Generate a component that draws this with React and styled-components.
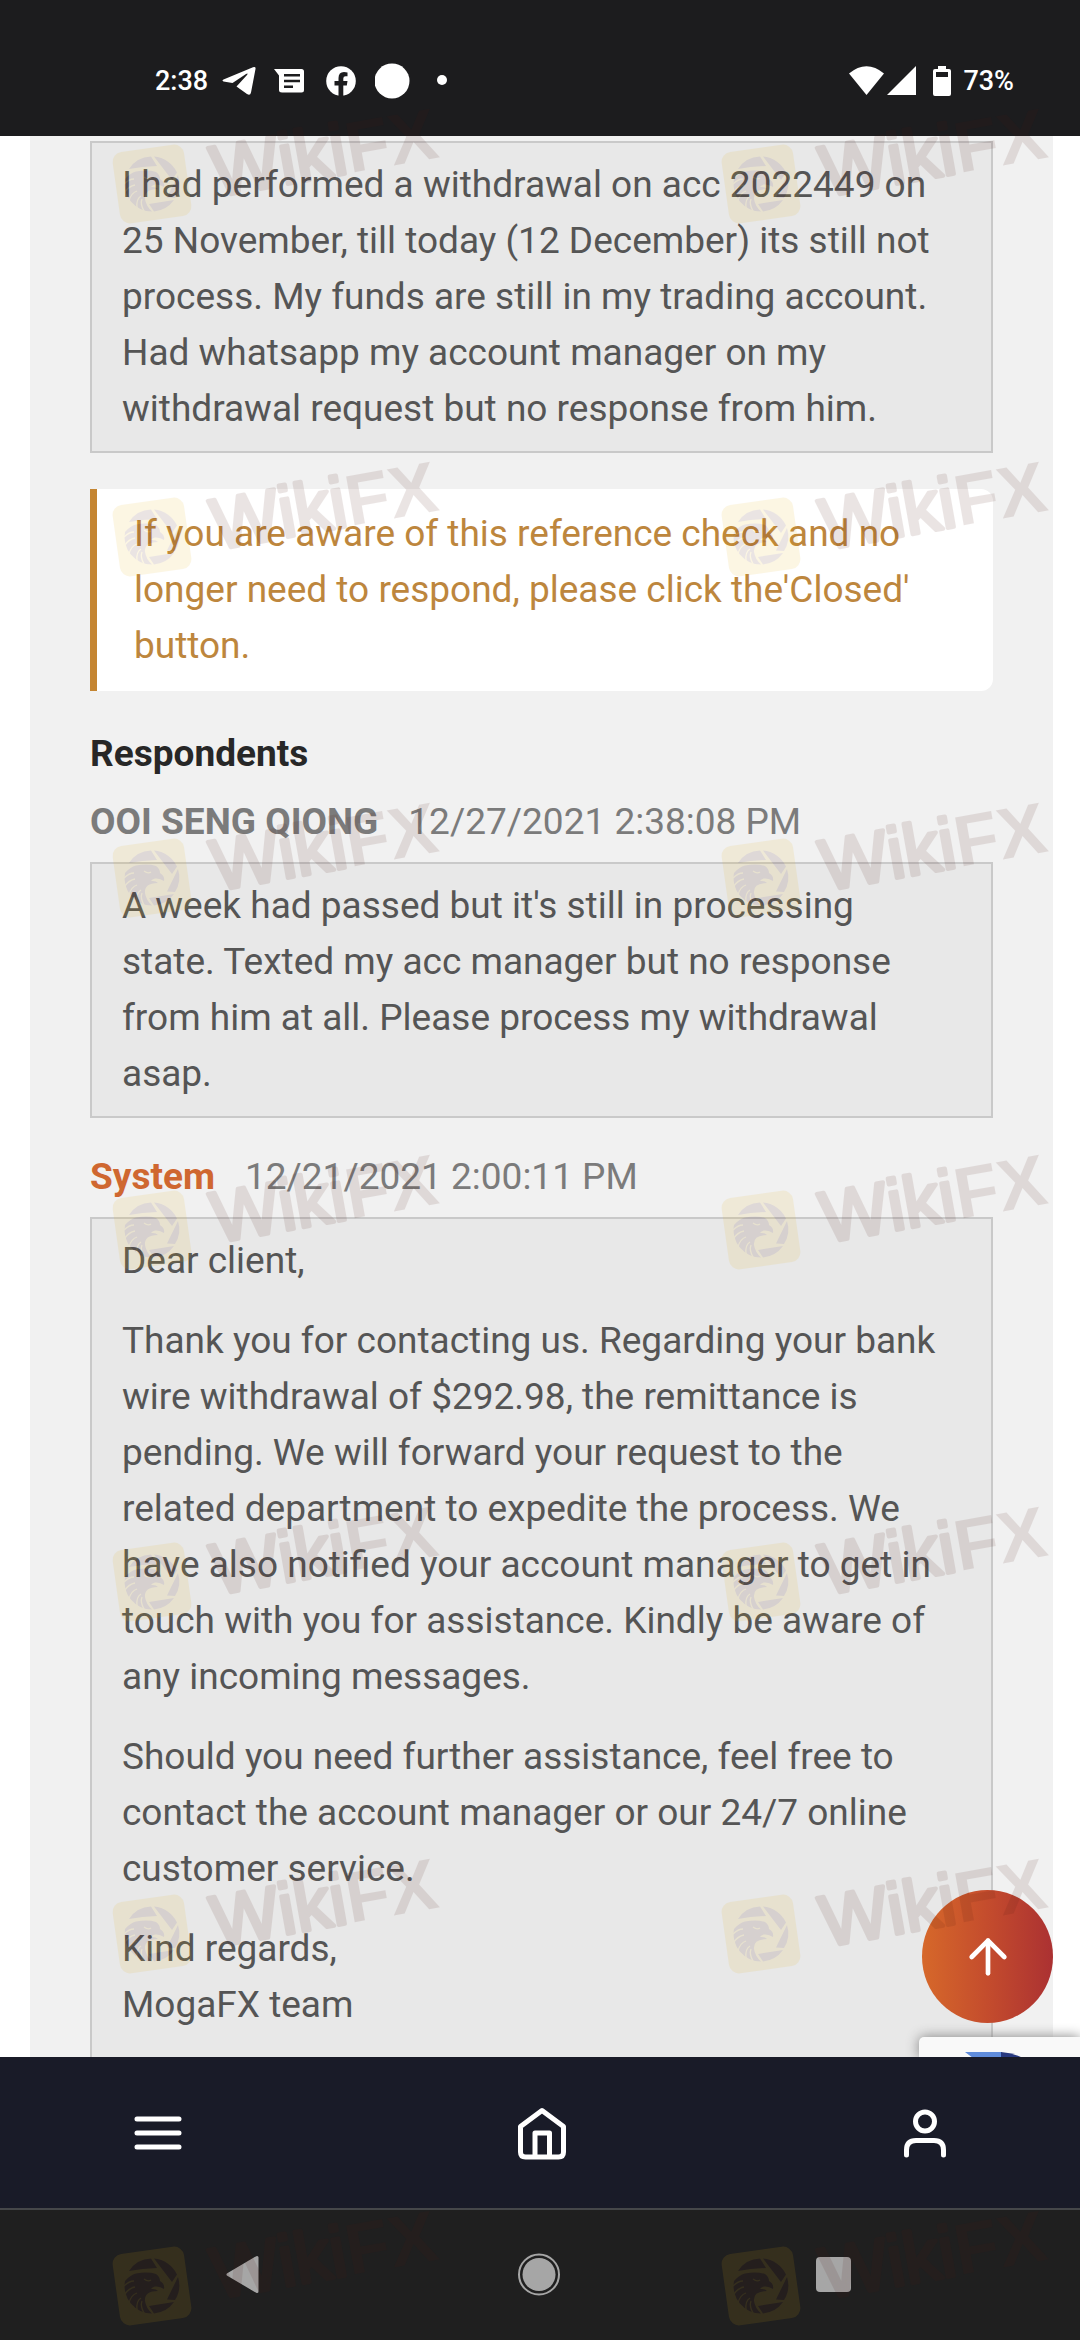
import React from 'react'
import styled, { createGlobalStyle } from 'styled-components'
import { ArrowUp } from 'lucide-react'

const GlobalStyle = createGlobalStyle`
  * {
    box-sizing: border-box;
  }
  body {
    margin: 0;
    background: #ffffff;
    font-family: Roboto, 'Liberation Sans', sans-serif;
  }
`

const Screen = styled.div`
  position: relative;
  display: flex;
  flex-direction: column;
  height: 100vh;
  overflow: hidden;
`

/* status bar */
const StatusBar = styled.header`
  display: flex;
  flex: none;
  align-items: center;
  justify-content: space-between;
  height: 136px;
  padding: 26px 66px 0 155px;
  background: #1c1c1e;
  color: #ffffff;
  font-size: 27px;
  font-weight: 500;
  line-height: 32px;
`

const StatusGroup = styled.div`
  display: flex;
  align-items: center;
  gap: ${props => props.$gap}px;

  svg {
    display: block;
  }
`

/* scrolled page */
const Page = styled.main`
  position: relative;
  flex: 1;
  min-height: 0;
  overflow: hidden;
  padding: 0 27px 0 30px;
`

const Panel = styled.section`
  min-height: 100%;
  padding: 5px 60px 60px;
  background: #f1f1f1;
  font-size: 37px;
  line-height: 56px;
`

const Message = styled.div`
  padding: 14px 42px 14px 30px;
  border: 2px solid #c9c9c9;
  background: #e8e8e8;
  color: #555555;

  p {
    margin: 0;
  }
  p + p {
    margin-top: 24px;
  }
`

const Letter = styled(Message)`
  padding-bottom: 38px;
`

const Notice = styled.p`
  margin: 36px 0 35px;
  padding: 17px 30px 17px 37px;
  border-left: 7px solid #c48532;
  border-radius: 0 12px 12px 0;
  background: #ffffff;
  color: #bd863d;
`

const Heading = styled.h2`
  margin: 0 0 12px;
  color: #272727;
  font-size: 37px;
  font-weight: 700;
`

const Meta = styled.div`
  display: flex;
  gap: 30px;
  margin: ${props => props.$top || 0}px 0 12px;
  color: #7b7b7b;
`

const Author = styled.strong`
  color: ${props => (props.$system ? '#cf6730' : '#7b7b7b')};
  font-weight: 700;
`

const TopButton = styled.button`
  position: absolute;
  right: 27px;
  bottom: 34px;
  display: flex;
  align-items: center;
  justify-content: center;
  width: 131px;
  height: 133px;
  padding: 0;
  border: 0;
  border-radius: 50%;
  background: linear-gradient(90deg, #d6682a, #c44c2d 50%, #ab3132);
  color: #ffffff;
`

const Captcha = styled.div`
  position: absolute;
  right: 0;
  bottom: 0;
  width: 161px;
  height: 20px;
  padding: 15px 0 0 46px;
  border-radius: 5px 0 0 0;
  background: #f9f9f9;
  box-shadow: 0 0 13px #808080;
  overflow: hidden;

  svg {
    display: block;
  }
`

/* bottom bars */
const BottomNav = styled.nav`
  display: flex;
  flex: none;
  align-items: center;
  justify-content: space-between;
  height: 153px;
  padding: 0 127px 0 130px;
  border-bottom: 2px solid #454749;
  background: #191b28;
`

const SystemNav = styled.nav`
  display: flex;
  flex: none;
  align-items: center;
  justify-content: space-between;
  height: 130px;
  padding: 0 224px 0 220px;
  background: #1f1f1f;
`

const IconButton = styled.button`
  padding: 0;
  border: 0;
  background: none;
  color: ${props => props.$color};

  svg {
    display: block;
  }
`

/* watermark laid over the whole screen */
const WatermarkLayer = styled.div`
  position: absolute;
  inset: 0;
  display: grid;
  grid-template-columns: auto auto;
  grid-template-rows: 353px 341px repeat(5, 352px);
  justify-content: space-between;
  padding: 105px 26px 0 100px;
  pointer-events: none;
`

const Mark = styled.svg`
  display: block;
  width: 345px;
  height: 132px;
  overflow: visible;
  opacity: 0.11;
`

const MarkText = styled.text`
  fill: #4d1810;
  font-family: 'Liberation Sans', Arial, sans-serif;
  font-size: 72px;
  font-weight: ${props => (props.$round ? 400 : 700)};
  stroke: #4d1810;
  stroke-width: ${props => (props.$round ? 4 : 0)};
  stroke-linejoin: round;
`

function Watermark() {
  return (
    <Mark viewBox="0 0 345 132" aria-hidden="true">
      <rect x="16" y="43" width="72" height="72" rx="10" fill="#e5b010" transform="rotate(-8 52 79)" />
      <g transform="translate(52 79)" fill="#4d1810">
        <path d="M-23-15A27.5 27.5 0 0 1-1-27.4L5-18Q-10-17.5-23-15Z" />
        <path d="M2-27.4A27.5 27.5 0 0 1 25-11.5L20-4Z" />
        <path d="M26-9A27.5 27.5 0 0 1 23 14L15 13.5Z" />
        <path d="M22 16A27.5 27.5 0 0 1 2 27.4L-3 20Z" />
        <path d="M0 27.5A27.5 27.5 0 0 1-27-5Q-22-11-16-12.5Q-4-14.5 4-12Q8-9 8-5Q13-2 12 3Q8 0 3 .5Q0 1 -1 3Q4 2.500 6 5Q-8 5-7 15Q-6 22 0 27.5Z" />
        <g fill="none" stroke="#e5b010" strokeWidth="1.3">
          <path d="M-28 0Q-23-5-18-5" />
          <path d="M-28 9Q-23 2-17 1" />
          <path d="M-23 17Q-21 9-15 7" />
          <path d="M-15 24Q-16 15-11 12" />
          <path d="M-8 27Q-12 20-10 15" />
          <path d="M-8-7Q-4-4-1-6" />
        </g>
      </g>
      <g transform="translate(114 92) rotate(-10)">
        <MarkText x="2" $round>Wiki</MarkText>
        <MarkText x="138">FX</MarkText>
      </g>
    </Mark>
  )
}

function StatusIcons() {
  return (
    <StatusGroup $gap={18}>
      <svg width="34" height="30" viewBox="0 0 34 30" fill="#ffffff">
        <path d="M1.500 13.500L31 1.200Q34 .4 33.500 3L29 26.500Q28.200 30 25 28L14.500 20.500L25 9Q26.500 6.800 24 8L10.500 17L1.500 15.500Q-.5 14.500 1.500 13.500Z" />
      </svg>
      <svg width="32" height="26" viewBox="0 0 32 26">
        <path fill="#ffffff" d="M0 1H27.500Q30 1 30 3.500V22Q30 24.500 27.500 24.500H8Q5 24.500 5 22V7.500Z" />
        <path stroke="#1c1c1e" strokeWidth="2.500" d="M10 7.200H26M10 13H26M10 18.700H19" />
      </svg>
      <svg width="33" height="30" viewBox="0 0 33 30">
        <circle cx="17" cy="15" r="14.800" fill="#ffffff" />
        <path fill="#1c1c1e" d="M14.500 30V19.500H10.500V15H14.500V12Q14.500 6 20 6Q22 6 23.500 6.400V10.200H21.500Q19.300 10.200 19.300 12.500V15H23.500L22.800 19.500H19.300V30Z" />
      </svg>
      <svg width="35" height="36" viewBox="0 0 35 36">
        <circle cx="17" cy="18" r="17.500" fill="#ffffff" />
      </svg>
      <svg width="28" height="12" viewBox="0 0 28 12">
        <circle cx="14" cy="5" r="5" fill="#ffffff" />
      </svg>
    </StatusGroup>
  )
}

function Home() {
  return (
    <svg width="56" height="56" viewBox="0 0 56 56" fill="none" stroke="currentColor" strokeWidth="5" strokeLinejoin="round">
      <path d="M28 5.500L49.500 21.500V47Q49.500 52 44.500 52H11.500Q6.500 52 6.500 47V21.500Z" />
      <path d="M21 52V28H35.500V52" />
    </svg>
  )
}

function User() {
  return (
    <svg width="56" height="56" viewBox="0 0 56 56" fill="none" stroke="currentColor" strokeWidth="5" strokeLinecap="round">
      <circle cx="28" cy="16.500" r="9.500" />
      <path d="M9.500 50V45Q9.500 35.500 19 35.500H37Q46.500 35.500 46.500 45V50" />
    </svg>
  )
}

export default function App() {
  return (
    <Screen>
      <GlobalStyle />
      <StatusBar>
        <StatusGroup $gap={14}>
          <span>2:38</span>
          <StatusIcons />
        </StatusGroup>
        <StatusGroup $gap={12}>
          <svg width="102" height="30" viewBox="0 0 102 30" fill="#ffffff">
            <path d="M0 7.500Q17.500-7 35 7.500L17.500 29Z" />
            <path d="M67 0V29H38Z" />
            <path fillRule="evenodd" d="M89 0H97V3H100Q102 3 102 5V28Q102 30 100 30H86Q84 30 84 28V5Q84 3 86 3H89ZM87 6V11H99V6Z" />
          </svg>
          <span>73%</span>
        </StatusGroup>
      </StatusBar>

      <Page>
        <Panel>
          <Message>
            <p>
              I had performed a withdrawal on acc 2022449 on 25 November, till today (12 December) its still not
              process. My funds are still in my trading account. Had whatsapp my account manager on my withdrawal
              request but no response from him.
            </p>
          </Message>
          <Notice>
            If you are aware of this reference check and no longer need to respond, please click the'Closed' button.
          </Notice>

          <Heading>Respondents</Heading>
          <Meta>
            <Author>OOI SENG QIONG</Author>
            <span>12/27/2021 2:38:08 PM</span>
          </Meta>
          <Message>
            <p>
              A week had passed but it's still in processing state. Texted my acc manager but no response from him at
              all. Please process my withdrawal asap.
            </p>
          </Message>

          <Meta $top={31}>
            <Author $system>System</Author>
            <span>12/21/2021 2:00:11 PM</span>
          </Meta>
          <Letter>
            <p>Dear client,</p>
            <p>
              Thank you for contacting us. Regarding your bank wire withdrawal of $292.98, the remittance is pending.
              We will forward your request to the related department to expedite the process. We have also notified
              your account manager to get in touch with you for assistance. Kindly be aware of any incoming messages.
            </p>
            <p>
              Should you need further assistance, feel free to contact the account manager or our 24/7 online customer
              service.
            </p>
            <p>
              Kind regards,
              <br />
              MogaFX team
            </p>
          </Letter>
        </Panel>
        <Captcha>
          <svg width="60" height="40" viewBox="0 0 60 40">
            <path fill="#5f8cdc" d="M0 0H37V40L8 6Z" />
            <path fill="#28397f" d="M36 0Q48 1 58 6V40H36Z" />
          </svg>
        </Captcha>
        <TopButton type="button" aria-label="Back to top">
          <ArrowUp size={56} strokeWidth={2} />
        </TopButton>
      </Page>

      <BottomNav>
        <IconButton type="button" aria-label="Menu" $color="#ffffff">
          <svg width="56" height="56" viewBox="0 0 56 56" stroke="currentColor" strokeWidth="5" strokeLinecap="round">
            <path d="M7 14H49M7 28H49M7 42H49" />
          </svg>
        </IconButton>
        <IconButton type="button" aria-label="Home" $color="#ffffff">
          <Home />
        </IconButton>
        <IconButton type="button" aria-label="Account" $color="#ffffff">
          <User />
        </IconButton>
      </BottomNav>

      <SystemNav>
        <IconButton type="button" aria-label="Back" $color="#a6a6a6">
          <svg width="44" height="44" viewBox="0 0 44 44" fill="currentColor" stroke="currentColor" strokeWidth="3" strokeLinejoin="round">
            <path d="M8 21.500L37 4.500V38.500Z" />
          </svg>
        </IconButton>
        <IconButton type="button" aria-label="Home screen" $color="#a6a6a6">
          <svg width="44" height="44" viewBox="0 0 44 44">
            <circle cx="23" cy="21.500" r="20" fill="none" stroke="currentColor" strokeWidth="2" />
            <circle cx="23" cy="21.500" r="16.500" fill="currentColor" />
          </svg>
        </IconButton>
        <IconButton type="button" aria-label="Recent apps" $color="#a6a6a6">
          <svg width="44" height="44" viewBox="0 0 44 44" fill="currentColor">
            <rect x="4" y="4" width="35" height="35" rx="4" />
          </svg>
        </IconButton>
      </SystemNav>

      <WatermarkLayer>
        {Array.from({ length: 14 }, (_, i) => (
          <Watermark key={i} />
        ))}
      </WatermarkLayer>
    </Screen>
  )
}
